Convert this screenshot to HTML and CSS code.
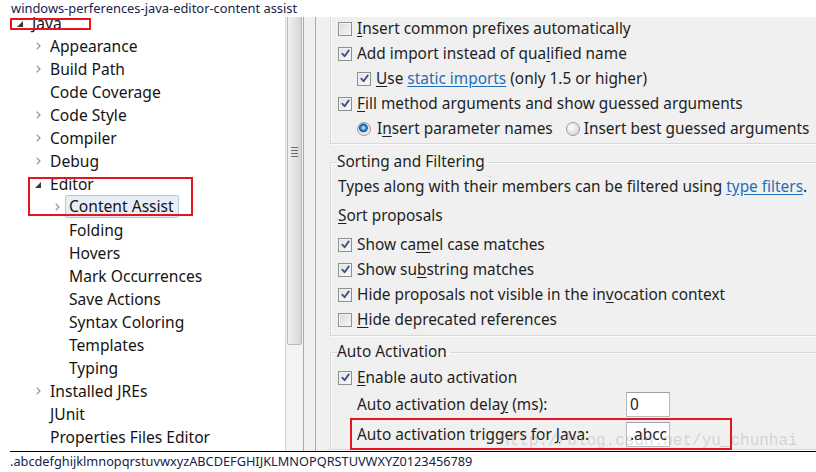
FILE: index.html
```html
<!DOCTYPE html>
<html>
<head>
<meta charset="utf-8">
<title>Preferences - Content Assist</title>
<link rel="stylesheet" href="styles.css">
</head>
<body>
<div class="caption">windows-perferences-java-editor-content assist</div>
<div class="main">
  <div class="tree">
    <ul class="nodes">
      <li class="node l0"><span class="tw"><svg class="tri" width="6" height="6" viewBox="0 0 6 6"><polygon points="6,0 6,6 0,6"/></svg></span>Java</li>
      <li class="node l1"><span class="tw"><svg class="chev" width="5" height="8" viewBox="0 0 5 8"><path d="M0.7 0.7 L4 4 L0.7 7.3"/></svg></span>Appearance</li>
      <li class="node l1"><span class="tw"><svg class="chev" width="5" height="8" viewBox="0 0 5 8"><path d="M0.7 0.7 L4 4 L0.7 7.3"/></svg></span>Build Path</li>
      <li class="node l1"><span class="tw"></span>Code Coverage</li>
      <li class="node l1"><span class="tw"><svg class="chev" width="5" height="8" viewBox="0 0 5 8"><path d="M0.7 0.7 L4 4 L0.7 7.3"/></svg></span>Code Style</li>
      <li class="node l1"><span class="tw"><svg class="chev" width="5" height="8" viewBox="0 0 5 8"><path d="M0.7 0.7 L4 4 L0.7 7.3"/></svg></span>Compiler</li>
      <li class="node l1"><span class="tw"><svg class="chev" width="5" height="8" viewBox="0 0 5 8"><path d="M0.7 0.7 L4 4 L0.7 7.3"/></svg></span>Debug</li>
      <li class="node l1"><span class="tw"><svg class="tri" width="6" height="6" viewBox="0 0 6 6"><polygon points="6,0 6,6 0,6"/></svg></span>Editor</li>
      <li class="node l2"><span class="tw"><svg class="chev" width="5" height="8" viewBox="0 0 5 8"><path d="M0.7 0.7 L4 4 L0.7 7.3"/></svg></span><span class="sel">Content Assist</span></li>
      <li class="node l2"><span class="tw"></span>Folding</li>
      <li class="node l2"><span class="tw"></span>Hovers</li>
      <li class="node l2"><span class="tw"></span>Mark Occurrences</li>
      <li class="node l2"><span class="tw"></span>Save Actions</li>
      <li class="node l2"><span class="tw"></span>Syntax Coloring</li>
      <li class="node l2"><span class="tw"></span>Templates</li>
      <li class="node l2"><span class="tw"></span>Typing</li>
      <li class="node l1"><span class="tw"><svg class="chev" width="5" height="8" viewBox="0 0 5 8"><path d="M0.7 0.7 L4 4 L0.7 7.3"/></svg></span>Installed JREs</li>
      <li class="node l1"><span class="tw"></span>JUnit</li>
      <li class="node l1"><span class="tw"></span>Properties Files Editor</li>
    </ul>
    <div class="mark mark-java"></div>
    <div class="mark mark-editor"></div>
  </div>
  <div class="vscroll"><div class="thumb"><span class="grip"></span></div></div>
  <div class="sash"></div>
  <div class="prefs">
    <fieldset class="group g1">
      <div class="row"><span class="cb"></span><span><u>I</u>nsert common prefixes automatically</span></div>
      <div class="row"><span class="cb on"><svg viewBox="0 0 12 12"><path d="M2.5 6.2 L5 9 L9.6 2.6"/></svg></span><span>Add import instead of qua<u>l</u>ified name</span></div>
      <div class="row ind"><span class="cb on"><svg viewBox="0 0 12 12"><path d="M2.5 6.2 L5 9 L9.6 2.6"/></svg></span><span><u>U</u>se <span class="link">static imports</span> (only 1.5 or higher)</span></div>
      <div class="row"><span class="cb on"><svg viewBox="0 0 12 12"><path d="M2.5 6.2 L5 9 L9.6 2.6"/></svg></span><span><u>F</u>ill method arguments and show guessed arguments</span></div>
      <div class="row ind"><span class="rb on"></span><span>I<u>n</u>sert parameter names</span><span class="rb rb-gap"></span><span>Insert best <u>g</u>uessed arguments</span></div>
    </fieldset>
    <fieldset class="group g2">
      <legend>Sorting and Filtering</legend>
      <div class="row first">Types along with their members can be filtered using&nbsp;<span class="link">type filters</span>.</div>
      <div class="row sp4"><u>S</u>ort proposals</div>
      <div class="row sp4"><span class="cb on"><svg viewBox="0 0 12 12"><path d="M2.5 6.2 L5 9 L9.6 2.6"/></svg></span><span>Show ca<u>m</u>el case matches</span></div>
      <div class="row"><span class="cb on"><svg viewBox="0 0 12 12"><path d="M2.5 6.2 L5 9 L9.6 2.6"/></svg></span><span>Show su<u>b</u>string matches</span></div>
      <div class="row"><span class="cb on"><svg viewBox="0 0 12 12"><path d="M2.5 6.2 L5 9 L9.6 2.6"/></svg></span><span>Hide proposals not visible in the in<u>v</u>ocation context</span></div>
      <div class="row"><span class="cb"></span><span><u>H</u>ide deprecated references</span></div>
    </fieldset>
    <fieldset class="group g3">
      <legend>Auto Activation</legend>
      <div class="row first3"><span class="cb on"><svg viewBox="0 0 12 12"><path d="M2.5 6.2 L5 9 L9.6 2.6"/></svg></span><span><u>E</u>nable auto activation</span></div>
      <div class="row ind sp2"><span class="lbl">Auto activation dela<u>y</u> (ms):</span><span class="field">0</span></div>
      <div class="row ind sp5"><span class="lbl">Auto activation triggers for <u>J</u>ava:</span><span class="field">.abcc</span></div>
    </fieldset>
    <div class="watermark">http://blog.csdn.net/yu_chunhai</div>
    <div class="mark mark-trig"></div>
  </div>
</div>
<div class="status">.abcdefghijklmnopqrstuvwxyzABCDEFGHIJKLMNOPQRSTUVWXYZ0123456789</div>
</body>
</html>
```

FILE: styles.css
```css
* { box-sizing: border-box; }
html, body { margin: 0; padding: 0; }
body {
  width: 816px;
  height: 472px;
  overflow: hidden;
  background: #fff;
  font-family: "Noto Sans", "Open Sans", sans-serif;
  color: #1a1a1a;
}
.caption {
  height: 17px;
  line-height: 16px;
  padding-left: 11px;
  font-size: 12.9px;
  color: #14244a;
  white-space: nowrap;
}
.main { display: flex; height: 434px; }

/* tree */
.tree { position: relative; width: 285px; flex: none; overflow: hidden; background: #fff; }
.nodes { list-style: none; margin: -6px 0 0; padding: 0; }
.node {
  display: flex;
  align-items: center;
  height: 23px;
  font-size: 15.6px;
  color: #141414;
  white-space: nowrap;
}
.l0 { padding-left: 16px; }
.l1 { padding-left: 34px; }
.l2 { padding-left: 53px; }
.tw { width: 8px; margin-right: 8px; display: flex; justify-content: center; align-items: center; flex: none; }
.tw svg { display: block; }
.chev path { fill: none; stroke: #8e8e8e; stroke-width: 1.1; }
.tri { margin-top: 2px; }
.tri polygon { fill: #3a3a3a; }
.sel {
  display: block;
  height: 23px;
  line-height: 21px;
  margin-left: -4px;
  padding: 0 4px 0 3px;
  background: #e8eef6;
  border: 1px solid #b3c7de;
  border-radius: 2px;
}
.mark { position: absolute; border: 2px solid #e2161f; pointer-events: none; }
.mark-java { left: 10px; top: 1px; width: 81px; height: 12px; }
.mark-editor { left: 28px; top: 160px; width: 165px; height: 39px; }

/* scrollbar */
.vscroll {
  width: 19px;
  flex: none;
  overflow: hidden;
  background: #f3f3f3;
  border-left: 1px solid #d6d6d6;
  border-right: 1px solid #aaaaaa;
}
.thumb {
  margin: -58px 1px 0;
  height: 386px;
  border: 1px solid #b9b9b9;
  border-radius: 0 0 2px 2px;
  background: linear-gradient(90deg, #f1f1f1, #e4e4e4 50%, #d5d5d5);
  display: flex;
  align-items: center;
  justify-content: center;
}
.grip {
  width: 7px;
  height: 10px;
  background: repeating-linear-gradient(180deg, #6e6e6e 0 1px, transparent 1px 3px);
}
.sash { width: 12px; flex: none; background: #f0f0f0; border-right: 1px solid #a9a9a9; }

/* preference page */
.prefs {
  position: relative;
  flex: 1;
  min-width: 0;
  overflow: hidden;
  background: #f0f0f0;
  padding-left: 14px;
  font-size: 15.4px;
  color: #1e1e1e;
}
.group {
  margin: 0 -30px 0 0;
  padding: 0 0 2px 7px;
  min-width: 0;
  border: 1px solid #d3d9de;
  box-shadow: inset 1px 1px 0 #fbfbfb, 1px 1px 0 #fbfbfb;
}
.group legend {
  padding: 0 3px 0 0;
  margin-left: -1px;
  line-height: 20px;
  font-size: 15.4px;
}
.g1 { border-top: 0; margin-top: -1px; }
.g2 { margin-top: 8px; padding-bottom: 3px; }
.g3 { margin-top: 6px; }
.row { display: flex; align-items: center; height: 25px; white-space: nowrap; }
.row u { text-decoration: underline; text-underline-offset: 2px; }
.ind { padding-left: 19px; }
.first { margin-top: 2px; }
.first3 { margin-top: 3px; }
.sp2 { margin-top: 2px; }
.sp4 { margin-top: 4px; }
.sp5 { margin-top: 5px; }
.link { color: #1d6fba; text-decoration: underline; text-underline-offset: 2px; }

.cb {
  width: 14px;
  height: 14px;
  margin-right: 5px;
  flex: none;
  border: 1px solid #8f8f8f;
  background: linear-gradient(135deg, #d9d9d9, #f7f7f7);
  box-shadow: inset 0 0 0 1px #f2f2f2;
  display: flex;
  align-items: center;
  justify-content: center;
}
.cb.on { background: linear-gradient(135deg, #e2e2e2, #fbfbfb); }
.cb svg { width: 11px; height: 11px; display: block; }
.cb svg path { fill: none; stroke: #3b5184; stroke-width: 2; stroke-linecap: round; stroke-linejoin: round; }

.rb {
  width: 14px;
  height: 14px;
  margin-right: 6px;
  flex: none;
  border-radius: 50%;
  border: 1px solid #9a9a9a;
  background: radial-gradient(circle at 35% 35%, #fdfdfd, #dadada 75%);
}
.rb.on {
  background: radial-gradient(circle at 45% 40%, #9fd3ff 0 1px, #2a88d8 2.5px, #0c4f94 4px, #d8d8d8 4.6px, #f3f3f3 7px);
}
.rb-gap { margin-left: 13px; margin-right: 4px; }

.lbl { width: 269px; flex: none; }
.field {
  width: 44px;
  height: 25px;
  flex: none;
  background: #fff;
  border: 1px solid #b6b9bf;
  border-top-color: #9da1a8;
  padding-left: 3px;
  line-height: 23px;
  overflow: hidden;
}

.watermark {
  position: absolute;
  left: 184px;
  top: 416px;
  font: 16px/16px "Liberation Mono", monospace;
  color: rgba(130, 130, 130, 0.28);
  white-space: nowrap;
  pointer-events: none;
}
.mark-trig { left: 34px; top: 401px; width: 382px; height: 32px; }

.status {
  margin-left: 10px;
  height: 21px;
  border-top: 1px solid #000;
  line-height: 19px;
  font-size: 12.75px;
  color: #14244a;
  white-space: nowrap;
}
```
